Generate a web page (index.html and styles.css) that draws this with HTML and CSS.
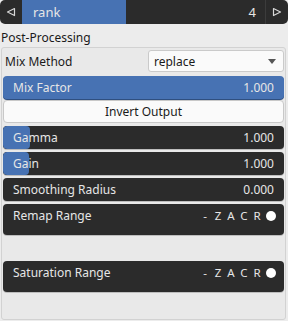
FILE: index.html
```html
<!DOCTYPE html>
<html>
<head>
    <title>Post-Processing</title>
    <link rel="stylesheet" href="styles.css">
</head>
<body>
    <div class="topbar">
        <div class="arrow">
            <svg width="10" height="10" viewBox="0 0 10 10"><path d="M8.5 1.5 L1.5 5 L8.5 8.5 Z" fill="none" stroke="#d8d8d8" stroke-width="1.2" stroke-linejoin="round"/></svg>
        </div>
        <div class="field">
            <div class="field-fill">rank</div>
            <div class="field-value">4</div>
        </div>
        <div class="arrow right">
            <svg width="10" height="10" viewBox="0 0 10 10"><path d="M1.5 1.5 L8.5 5 L1.5 8.5 Z" fill="none" stroke="#d8d8d8" stroke-width="1.2" stroke-linejoin="round"/></svg>
        </div>
    </div>
    <div class="section-title">Post-Processing</div>
    <div class="panel">
        <div class="row-select">
            <span class="label">Mix Method</span>
            <div class="select">
                <span>replace</span>
                <svg width="8" height="5" viewBox="0 0 8 5"><path d="M0 0 L8 0 L4 5 Z" fill="#555"/></svg>
            </div>
        </div>
        <div class="slider full">
            <span>Mix Factor</span><span>1.000</span>
        </div>
        <div class="button">Invert Output</div>
        <div class="slider">
            <div class="fill" style="width: 27px"></div>
            <span>Gamma</span><span>1.000</span>
        </div>
        <div class="slider">
            <div class="fill" style="width: 26px"></div>
            <span>Gain</span><span>1.000</span>
        </div>
        <div class="slider">
            <span>Smoothing Radius</span><span>0.000</span>
        </div>
        <div class="range">
            <span>Remap Range</span>
            <span class="flags"><b>-</b><b>Z</b><b>A</b><b>C</b><b>R</b><i class="dot"></i></span>
        </div>
        <div class="range second">
            <span>Saturation Range</span>
            <span class="flags"><b>-</b><b>Z</b><b>A</b><b>C</b><b>R</b><i class="dot"></i></span>
        </div>
    </div>
</body>
</html>
```
FILE: styles.css
```css
body {
    margin: 0;
    background: #ececec;
    font-family: "Noto Sans", sans-serif;
    font-size: 12px;
    color: #1a1a1a;
}
.topbar {
    display: flex;
    height: 24px;
    background: #2b2b2b;
    border-radius: 5px;
}
.arrow {
    width: 22px;
    display: flex;
    align-items: center;
    justify-content: center;
}
.arrow.right {
    border-left: 1px solid #3c3c3c;
}
.field {
    flex: 1;
    display: flex;
    justify-content: space-between;
    align-items: stretch;
    color: #e6e6e6;
}
.field-fill {
    width: 104px;
    background: #4772b3;
    padding-left: 11px;
    box-sizing: border-box;
    line-height: 24px;
    font-size: 13px;
}
.field-value {
    line-height: 24px;
    padding-right: 9px;
    font-size: 13px;
}
.section-title {
    padding: 5px 1px 0;
    height: 18px;
}
.panel {
    margin: 0 2px 2px 1px;
    height: 270px;
    border: 1px solid #d2d2d2;
    border-radius: 3px;
    background: #e9e9e9;
    padding: 1px 1px 0 1px;
}
.row-select {
    display: flex;
    justify-content: space-between;
    align-items: center;
    height: 24px;
}
.label {
    padding-left: 2px;
}
.select {
    width: 136px;
    height: 22px;
    box-sizing: border-box;
    background: #fafafa;
    border: 1px solid #cacaca;
    border-radius: 3px;
    display: flex;
    justify-content: space-between;
    align-items: center;
    padding: 0 7px 0 5px;
}
.slider, .range {
    position: relative;
    display: flex;
    justify-content: space-between;
    height: 23px;
    line-height: 23px;
    margin-top: 3px;
    padding: 0 10px 0 10px;
    background: #2b2b2b;
    color: #e6e6e6;
    border-radius: 4px;
    box-shadow: 0 1px 0 #bdbdbd;
    overflow: hidden;
}
.slider span, .range span {
    position: relative;
}
.slider.full {
    background: #4772b3;
    box-shadow: 0 1px 0 #2f4f80;
}
.fill {
    position: absolute;
    left: 0;
    top: 0;
    bottom: 0;
    background: #4772b3;
    border-radius: 4px;
}
.button {
    margin-top: 1px;
    height: 23px;
    line-height: 22px;
    text-align: center;
    background: #fafafa;
    border: 1px solid #c8c8c8;
    border-radius: 4px;
    box-sizing: border-box;
}
.range {
    height: 31px;
    line-height: 24px;
    padding-right: 8px;
}
.range.second {
    margin-top: 26px;
}
.flags {
    font-size: 11.5px;
    display: flex;
    align-items: center;
    gap: 5px;
    height: 24px;
}
.flags b {
    font-weight: normal;
    width: 8px;
    text-align: center;
}
.dot {
    display: inline-block;
    width: 10px;
    height: 10px;
    border-radius: 50%;
    background: #fff;
    margin-left: 0;
}
```
